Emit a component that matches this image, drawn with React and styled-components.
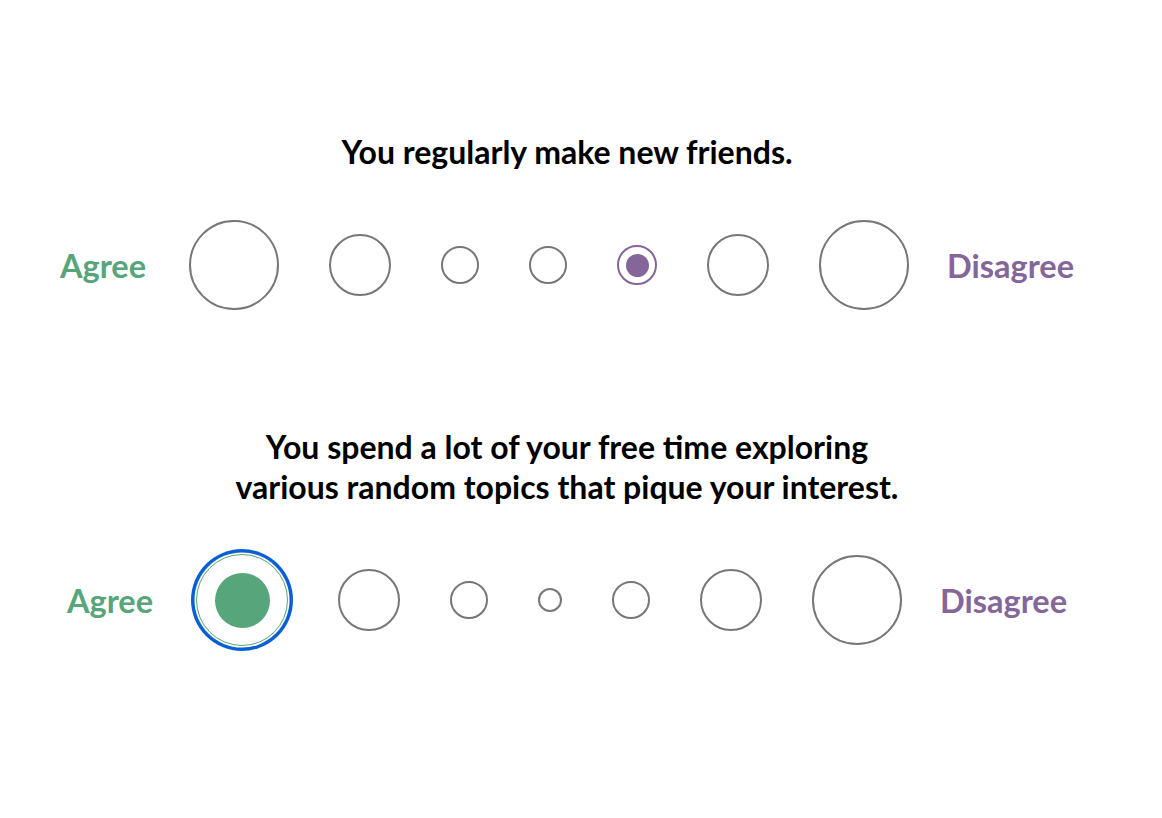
import React, { useState } from "react";
import styled, { createGlobalStyle, css } from "styled-components";

const GlobalStyle = createGlobalStyle`
  html, body {
    margin: 0;
    padding: 0;
    background: #ffffff;
  }
  body {
    font-family: Lato, "Open Sans", "Liberation Sans", sans-serif;
  }
`;

const GREEN = "#57a57a";
const PURPLE = "#84669a";
const GREY = "#777777";

const Page = styled.main`
  width: 1134px;
  padding: 132px 0 120px;
  display: flex;
  flex-direction: column;
  align-items: center;
  gap: 117px;
`;

const Question = styled.section`
  display: flex;
  flex-direction: column;
  align-items: center;
  gap: 48px;
`;

const Title = styled.h2`
  margin: 0;
  font-size: 32px;
  line-height: 40px;
  font-weight: 700;
  color: #000;
  text-align: center;
`;

const Row = styled.div`
  display: flex;
  align-items: center;
  gap: 43px;
  height: 90px;
`;

const Label = styled.span`
  font-size: 32.5px;
  font-weight: 700;
  color: ${(p) => (p.$side === "agree" ? GREEN : PURPLE)};
  margin-left: ${(p) => (p.$side === "agree" ? 0 : -5)}px;
`;

const Scale = styled.div`
  display: flex;
  align-items: center;
  gap: 50px;
`;

const Option = styled.button`
  box-sizing: border-box;
  width: ${(p) => p.$size}px;
  height: ${(p) => p.$size}px;
  border-radius: 50%;
  border: 2px solid ${GREY};
  background: #fff;
  padding: 0;
  display: flex;
  align-items: center;
  justify-content: center;
  cursor: pointer;
  flex: none;

  ${(p) =>
    p.$checked &&
    css`
      border-color: ${p.$color};
      border-width: ${p.$size > 60 ? 1.5 : 2}px;
    `}

  ${(p) =>
    p.$focused &&
    css`
      box-shadow: 0 0 0 1.5px #fff, 0 0 0 5px #0a5fd2;
    `}
`;

const Dot = styled.span`
  width: ${(p) => p.$size}px;
  height: ${(p) => p.$size}px;
  border-radius: 50%;
  background: ${(p) => p.$color};
`;

const questions = [
  {
    text: "You regularly make new friends.",
    sizes: [90, 62, 38, 38, 38, 62, 90],
    initial: 4,
    focused: false,
  },
  {
    text: (
      <>
        You spend a lot of your free time exploring
        <br />
        various random topics that pique your interest.
      </>
    ),
    sizes: [90, 62, 38, 24, 38, 62, 90],
    initial: 0,
    focused: true,
  },
];

const QuestionBlock = ({ q }) => {
  const [value, setValue] = useState(q.initial);

  return (
    <Question>
      <Title>{q.text}</Title>
      <Row>
        <Label $side="agree">Agree</Label>
        <Scale>
          {q.sizes.map((size, i) => {
            const checked = i === value;
            const color = i < 3 ? GREEN : PURPLE;
            const real = checked ? size + 2 : size;
            return (
              <Option
                key={i}
                $size={real}
                $checked={checked}
                $color={color}
                $focused={checked && q.focused}
                onClick={() => setValue(i)}
              >
                {checked && (
                  <Dot $size={Math.round(real * 0.6) - (real > 60 ? 0 : 1)} $color={color} />
                )}
              </Option>
            );
          })}
        </Scale>
        <Label $side="disagree">Disagree</Label>
      </Row>
    </Question>
  );
};

const App = () => {
  return (
    <>
      <GlobalStyle />
      <Page>
        {questions.map((q, i) => (
          <QuestionBlock key={i} q={q} />
        ))}
      </Page>
    </>
  );
};

export default App;
